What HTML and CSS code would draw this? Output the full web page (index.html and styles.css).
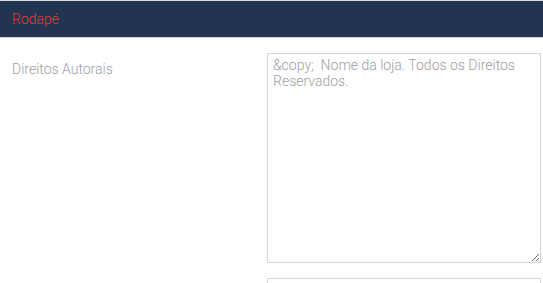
FILE: index.html
```html
<!DOCTYPE html>
<html lang="pt">
<head>
    <meta charset="UTF-8">
    <title>Rodapé</title>
    <link rel="stylesheet" href="styles.css">
</head>
<body>
    <div class="panel">
        <div class="panel-heading">Rodapé</div>
        <div class="panel-body">
            <div class="form-row">
                <label class="form-label" for="copyright">Direitos Autorais</label>
                <textarea id="copyright" class="form-control" placeholder="&amp;copy;  Nome da loja. Todos os Direitos Reservados."></textarea>
            </div>
            <div class="form-row">
                <label class="form-label" for="next"></label>
                <input id="next" class="form-control input" type="text">
            </div>
        </div>
    </div>
</body>
</html>
```

FILE: styles.css
```css
body { margin: 0; font-family: Roboto, "Noto Sans", sans-serif; font-weight: 300; background: #fff; }
.panel { border-top: 1px solid #d9dce0; }
.panel-heading { background-color: #213450; color: #e0402f; font-size: 14px; height: 36px; line-height: 36px; padding: 0 12px; border-bottom: 1px solid #cfd2d6; }
.panel-body { padding: 15px 2px 0 12px; }
.form-row { display: grid; grid-template-columns: 255px 1fr; margin-bottom: 15px; }
.form-label { color: #9a9ea6; font-size: 14px; padding-top: 8px; }
.form-control { box-sizing: border-box; width: 274px; border: 1px solid #d3d5da; font-family: inherit; font-weight: 300; font-size: 14px; color: #555; padding: 3px 5px; margin: 0; }
textarea.form-control { height: 210px; line-height: 16px; resize: vertical; }
.form-control::placeholder { color: #9a9ea6; opacity: 1; }
.input { height: 34px; }
```
